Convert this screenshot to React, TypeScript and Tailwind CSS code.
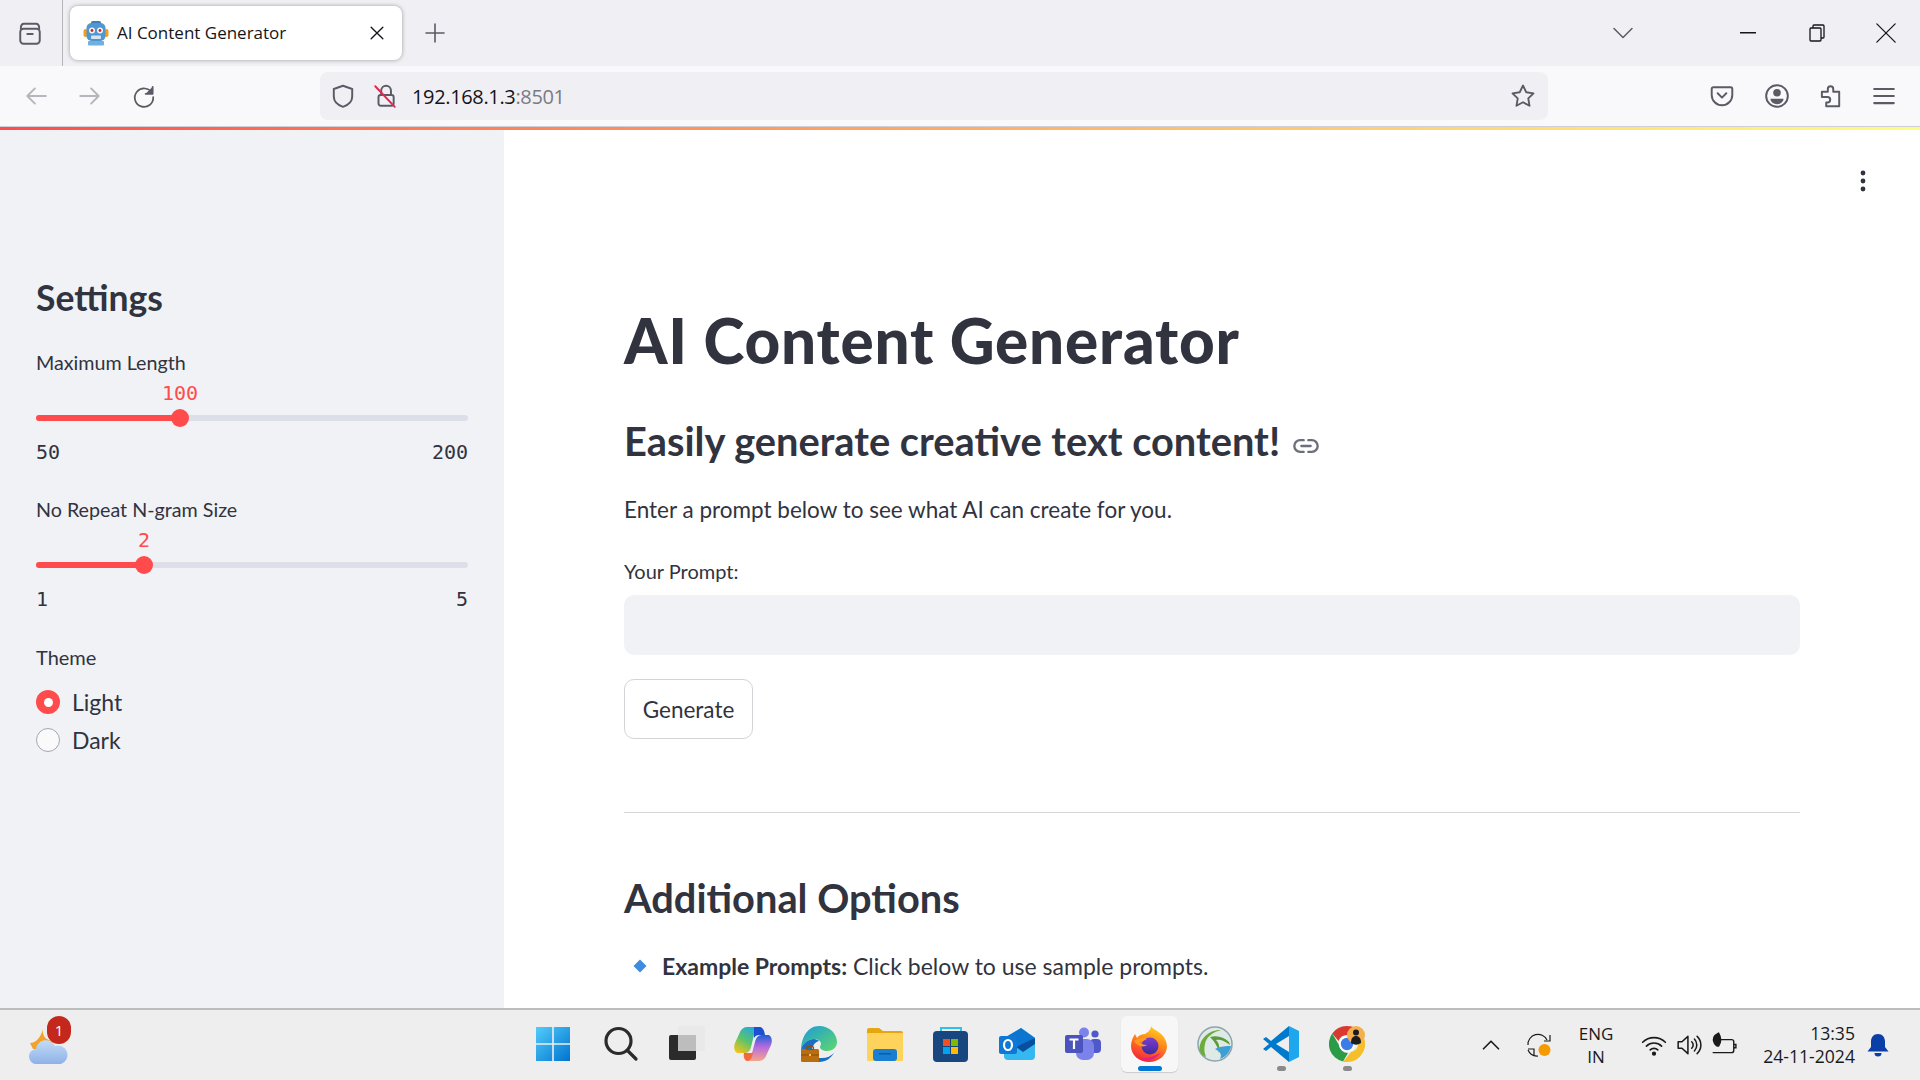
import { ReactNode } from "react";

const sans = "font-['Lato','Noto_Sans',sans-serif]";
const mono = "font-['DejaVu_Sans_Mono',monospace]";
const ui = "font-['Open_Sans','Noto_Sans',sans-serif]";

// stroked toolbar glyph
function Glyph({ size = 24, color = "#5b5b66", width = 1.8, children }: { size?: number; color?: string; width?: number; children: ReactNode }) {
  return (
    <svg width={size} height={size} viewBox="0 0 24 24" fill="none" stroke={color} strokeWidth={width} strokeLinecap="round" strokeLinejoin="round">
      {children}
    </svg>
  );
}

function RobotFavicon() {
  return (
    <svg width="26" height="26" viewBox="0 0 26 26">
      <rect x="0.5" y="9" width="4" height="8" rx="2" fill="#f59e1b" />
      <rect x="21.5" y="9" width="4" height="8" rx="2" fill="#f59e1b" />
      <rect x="8" y="1" width="10" height="4" rx="1.5" fill="#3f7fb8" />
      <rect x="3.5" y="3" width="19" height="18" rx="5" fill="#4f97d1" />
      <circle cx="9" cy="10.5" r="3" fill="#eef3f7" />
      <circle cx="17" cy="10.5" r="3" fill="#eef3f7" />
      <circle cx="9" cy="10.5" r="1.4" fill="#d2242c" />
      <circle cx="17" cy="10.5" r="1.4" fill="#d2242c" />
      <rect x="8" y="15.5" width="10" height="3.5" rx="1" fill="#d6e4ef" />
      <rect x="5" y="21" width="16" height="4.5" rx="1" fill="#6fb0e0" />
    </svg>
  );
}

function WeatherIcon() {
  return (
    <div className="relative h-[40px] w-[42px]">
      <svg width="40" height="40" viewBox="0 0 40 40" className="absolute left-0 top-0">
        <defs>
          <linearGradient id="cloud" x1="0" y1="0" x2="0" y2="1">
            <stop offset="0" stopColor="#c3dcf5" />
            <stop offset="1" stopColor="#8eb1e8" />
          </linearGradient>
        </defs>
        <path d="M14 4c-1 7 3 12 11 12l-6 8H4L1 18c6 0 11-6 13-14z" fill="#f3a32b" />
        <path d="M8 39a7.500 7.500 0 0 1-1-15 10 10 0 0 1 19-3 9 9 0 0 1 6 18z" fill="url(#cloud)" />
      </svg>
      <span className={`absolute left-[18px] top-[-9px] flex h-[28px] w-[24px] items-center justify-center rounded-full bg-[#c4281c] text-[15px] text-white ${ui}`}>1</span>
    </div>
  );
}

function WindowsLogo() {
  return (
    <svg width="36" height="36" viewBox="0 0 36 36">
      <defs>
        <linearGradient id="win" x1="0" y1="0" x2="1" y2="1">
          <stop offset="0" stopColor="#52cdfb" />
          <stop offset="1" stopColor="#0073cf" />
        </linearGradient>
      </defs>
      <path d="M1 1h16.200v16.200H1zM18.800 1H35v16.200H18.800zM1 18.800h16.200V35H1zM18.800 18.800H35V35H18.800z" fill="url(#win)" />
    </svg>
  );
}

function TaskView() {
  return (
    <svg width="36" height="36" viewBox="0 0 36 36">
      <rect x="0" y="9" width="27" height="25" rx="2" fill="#2b2b2b" />
      <rect x="9" y="0" width="27" height="25" rx="2" fill="#e7e7e7" fillOpacity="0.85" />
      <rect x="9" y="9" width="18" height="16" fill="#bdbdbd" />
    </svg>
  );
}

function Copilot() {
  return (
    <svg width="38" height="36" viewBox="0 0 38 36">
      <defs>
        <linearGradient id="cpa" x1="0.8" y1="0" x2="0.2" y2="1">
          <stop offset="0" stopColor="#1fa6e8" />
          <stop offset="0.55" stopColor="#5cc46a" />
          <stop offset="1" stopColor="#f2c21a" />
        </linearGradient>
        <linearGradient id="cpb" x1="0.5" y1="0" x2="0.5" y2="1">
          <stop offset="0" stopColor="#1d5fd6" />
          <stop offset="0.45" stopColor="#b56ae0" />
          <stop offset="1" stopColor="#f5a58a" />
        </linearGradient>
      </defs>
      <path d="M13 1h13c-4 1-5 4-6 8l-3 12c-1 4-3 6-7 6H4C1 27-1 22 1 17L6 6c1-3 4-5 7-5z" fill="url(#cpa)" />
      <path d="M25 35H12c4-1 5-4 6-8l3-11c1-4 3-7 7-7h6c3 0 5 5 3 10l-5 11c-1 3-4 5-7 5z" fill="url(#cpb)" />
      <path d="M20 1h6c2 0 4 2 5 8h-6c-2 0-4 1-5 3z" fill="#1d4fd0" />
      <path d="M10 27h9c-1 5-3 8-6 8-2 0-4-4-3-8z" fill="#f2693a" />
    </svg>
  );
}

function EdgeIcon() {
  return (
    <svg width="36" height="36" viewBox="0 0 36 36">
      <defs>
        <linearGradient id="edge" x1="0" y1="0" x2="1" y2="1">
          <stop offset="0" stopColor="#1c9ad8" />
          <stop offset="1" stopColor="#5fd96b" />
        </linearGradient>
      </defs>
      <path d="M18 0c11 0 18 8 18 16 0 6-5 9-10 9-4 0-7-2-7-4 0-1 1-2 1-3 0-3-3-5-7-5-6 0-13 5-13 12C0 11 7 0 18 0z" fill="url(#edge)" />
      <path d="M0 25c0-7 7-12 13-12 2 0 4 1 5 2-4 1-7 5-7 10 0 5 3 9 7 11C9 36 0 32 0 25z" fill="#1b6fc2" />
      <path d="M33 27c-3 5-8 9-15 9-3 0-5-2-7-4h10c5 0 9-2 12-5z" fill="#1b6fc2" />
      <rect x="0" y="23" width="18" height="13" rx="1.500" fill="#b96c10" />
      <rect x="5.500" y="20.500" width="7" height="3" rx="1" fill="none" stroke="#8a4f08" strokeWidth="1.200" />
      <rect x="0" y="28.500" width="18" height="1" fill="#8a4f08" />
      <rect x="8" y="28" width="2" height="2" fill="#f5c55a" />
    </svg>
  );
}

function FolderIcon() {
  return (
    <svg width="36" height="34" viewBox="0 0 36 34">
      <path d="M0 3a2 2 0 0 1 2-2h10l4 3h18a2 2 0 0 1 2 2v4H0z" fill="#e5a60f" />
      <rect x="0" y="6" width="36" height="28" rx="1" fill="#fdd35c" />
      <rect x="6" y="22" width="24" height="12" rx="3" fill="#1a7fd0" />
      <rect x="12" y="26" width="12" height="1.500" fill="#0c5da3" />
    </svg>
  );
}

function StoreIcon() {
  return (
    <svg width="36" height="36" viewBox="0 0 36 36">
      <path d="M8 6V2h20v4" fill="none" stroke="#2ec1ee" strokeWidth="2" />
      <rect x="0" y="5" width="35" height="31" rx="4" fill="#18467f" />
      <rect x="10" y="13" width="7" height="7" fill="#f25022" />
      <rect x="18" y="13" width="7" height="7" fill="#7fba00" />
      <rect x="10" y="21" width="7" height="7" fill="#00a4ef" />
      <rect x="18" y="21" width="7" height="7" fill="#ffb900" />
    </svg>
  );
}

function OutlookIcon() {
  return (
    <svg width="36" height="36" viewBox="0 0 36 36">
      <path d="M5 14L22 2l14 10v18a4 4 0 0 1-4 4H9a4 4 0 0 1-4-4z" fill="#35b8f1" />
      <path d="M22 2l14 10-14 10L5 12z" fill="#0b75cf" />
      <path d="M36 12v6l-12 8-7-5z" fill="#0a4f9e" />
      <rect x="0" y="10" width="18" height="18" rx="2" fill="#0f78d4" />
      <ellipse cx="9" cy="19" rx="4" ry="5" fill="none" stroke="#fff" strokeWidth="2.200" />
    </svg>
  );
}

function TeamsIcon() {
  return (
    <svg width="36" height="34" viewBox="0 0 36 34">
      <circle cx="19" cy="5.500" r="5" fill="#7b83eb" />
      <circle cx="30" cy="7" r="3.600" fill="#5059c9" />
      <rect x="25" y="12" width="11" height="14" rx="4" fill="#5059c9" />
      <rect x="11" y="12" width="18" height="21" rx="7" fill="#7b83eb" />
      <rect x="0" y="8" width="18" height="18" rx="2" fill="#4b53bc" />
      <path d="M4.500 12.500h9M9 12.500v9.500" stroke="#fff" strokeWidth="2.200" />
    </svg>
  );
}

function FirefoxIcon() {
  return (
    <svg width="36" height="36" viewBox="0 0 36 36">
      <defs>
        <linearGradient id="ffa" x1="0.7" y1="0" x2="0.3" y2="1">
          <stop offset="0" stopColor="#ffd51f" />
          <stop offset="0.5" stopColor="#ff7a1c" />
          <stop offset="1" stopColor="#f0213f" />
        </linearGradient>
        <linearGradient id="ffb" x1="0" y1="0" x2="0" y2="1">
          <stop offset="0" stopColor="#7d3fd1" />
          <stop offset="1" stopColor="#3b2a9c" />
        </linearGradient>
      </defs>
      <path d="M20 0c1 3 8 5 12 10 4 5 4 10 4 10 0 9-8 16-18 16S0 29 0 20c0-5 2-9 4-12l2 4c2-3 5-4 8-4 3-2 6-4 6-8z" fill="url(#ffa)" />
      <circle cx="19" cy="20" r="8.500" fill="url(#ffb)" />
      <path d="M3 15c4-3 9-4 13-2-3 1-5 3-8 3 2 2 5 3 8 3-4 3-10 1-13-4z" fill="#ff9a1f" />
      <path d="M9 33c7 3 17 0 21-7-4 4-14 6-21 7z" fill="#e0218a" />
    </svg>
  );
}

function GlobeIcon() {
  return (
    <svg width="36" height="36" viewBox="0 0 36 36">
      <circle cx="18" cy="18" r="17" fill="#dfe9e6" stroke="#8ba5ac" strokeWidth="1.500" />
      <path d="M2.500 24C2 13 12 3.500 24 4c-8 2-15 7-16 14-1 4-1 8 1 13-3-1-5-3-6.500-7z" fill="#6dab3c" />
      <path d="M13 11c7-2 14 0 19 5l1 3c-6-5-11-6-14-5 3 3 4 7 3 13-1-5-3-10-9-16z" fill="#5a9c38" />
      <path d="M18 23c6-3 11-3 16-3-1 6-5 11-11 13 2-4 1-7-5-10z" fill="#3d9fd3" />
    </svg>
  );
}

function VsCodeIcon() {
  return (
    <svg width="36" height="36" viewBox="0 0 36 36">
      <path d="M26 0l10 5v26l-10 5z" fill="#1fa7ee" />
      <path d="M26 0v10L13 18l13 8v10L8 21l-5 4-3-2 6-5-6-5 3-2 5 4z" fill="#007acc" />
    </svg>
  );
}

function ChromeIcon() {
  return (
    <svg width="36" height="36" viewBox="0 0 36 36">
      <path d="M18 0a18 18 0 0 1 15.600 9H18a9 9 0 0 0-8.500 6L3.200 7.500A18 18 0 0 1 18 0z" fill="#d93a2f" />
      <path d="M3.200 7.500L10 19a9 9 0 0 0 9 8l-5 8.500A18 18 0 0 1 3.200 7.500z" fill="#2b9b47" />
      <path d="M33.600 9A18 18 0 0 1 18 36l-4 0 8-10a9 9 0 0 0 2-17z" fill="#f5bf2a" />
      <circle cx="18" cy="18" r="8" fill="#fff" />
      <circle cx="18" cy="18" r="6.200" fill="#3a7de8" />
      <circle cx="27" cy="9" r="9" fill="#f4b04a" />
      <circle cx="27" cy="6.500" r="3" fill="#1d1d1d" />
      <path d="M22 17c0-5 2-7 5-7s5 2 5 7a9 9 0 0 1-10 0z" fill="#1d1d1d" />
    </svg>
  );
}

function TaskItem({ children, active, dot, className }: { children: ReactNode; active?: boolean; dot?: boolean; className?: string }) {
  return (
    <div className={`relative flex h-[56px] w-[66px] items-center justify-center ${className ?? ""}`}>
      {active && <div className="absolute left-[5px] top-0 h-[56px] w-[57px] rounded-md bg-[#f7f7f7] shadow-[0_1px_1px_rgba(0,0,0,0.15)]" />}
      <div className="relative flex items-center justify-center">{children}</div>
      {active && <div className="absolute bottom-[1px] left-[22px] h-[5px] w-[24px] rounded-full bg-[#0078d4]" />}
      {dot && <div className="absolute bottom-[1px] left-[29px] h-[5px] w-[9px] rounded-full bg-[#8a8a8a]" />}
    </div>
  );
}

function Slider({ label, value, min, max, thumbClass, fillClass, valueClass }: { label: string; value: string; min: string; max: string; thumbClass: string; fillClass: string; valueClass: string }) {
  return (
    <div>
      <div className="h-[30px] text-[19.700px] leading-[30px] text-[#31333f]">{label}</div>
      <div className="relative h-[90px] pt-[37px]">
        <div className={`absolute top-0 w-[60px] text-center text-[20px] leading-[30px] text-[#ff4b4b] ${mono} ${valueClass}`}>{value}</div>
        <div className="relative h-[6px] rounded-full bg-[#dcdfe8]">
          <div className={`h-[6px] rounded-full bg-[#ff4b4b] ${fillClass}`} />
          <div className={`absolute top-[-6px] h-[18px] w-[18px] rounded-full bg-[#ff4b4b] ${thumbClass}`} />
        </div>
        <div className={`mt-[16px] flex justify-between text-[20px] leading-[30px] text-[#31333f] ${mono}`}>
          <span>{min}</span>
          <span>{max}</span>
        </div>
      </div>
    </div>
  );
}

export default function App() {
  return (
    <div className={`flex h-screen w-[1920px] flex-col overflow-hidden bg-white ${sans}`}>
      {/* tab strip */}
      <div className="flex h-[66px] shrink-0 items-center bg-[#f0f0f4]">
        <div className="flex h-full w-[63px] items-center justify-center border-r border-[#b5b5bb] pr-[3px]">
          <Glyph size={26}>
            <rect x="3" y="8" width="18" height="14" rx="3" />
            <path d="M6 3.500h12M3.500 8c0-3 1-4.500 3-4.500M20.500 8c0-3-1-4.500-3-4.500M9.500 13h5" />
          </Glyph>
        </div>
        <div className="ml-[7px] flex h-[54px] w-[332px] items-center rounded-lg bg-white pl-[13px] pr-[15px] shadow-[0_0_4px_rgba(0,0,0,0.35)]">
          <RobotFavicon />
          <span className={`ml-[8px] text-[17px] text-[#15141a] ${ui}`}>AI Content Generator</span>
          <span className="ml-auto">
            <Glyph size={20} color="#15141a" width={1.600}>
              <path d="M5 5l14 14M19 5L5 19" />
            </Glyph>
          </span>
        </div>
        <div className="flex w-[66px] items-center justify-center">
          <Glyph size={24} color="#5b5b66" width={1.600}>
            <path d="M12 3v18M3 12h18" />
          </Glyph>
        </div>
        <div className="ml-auto flex items-center">
          <Glyph size={24} color="#5b5b66" width={1.500}>
            <path d="M3 7.500l9 9 9-9" />
          </Glyph>
          <div className="ml-[78px] flex w-[69px] justify-center">
            <svg width="16" height="2" viewBox="0 0 16 2"><rect width="16" height="1.500" fill="#15141a" /></svg>
          </div>
          <div className="flex w-[69px] justify-center">
            <svg width="16" height="18" viewBox="0 0 16 18" fill="none" stroke="#15141a" strokeWidth="1.300">
              <rect x="1" y="4" width="11" height="13" rx="1" />
              <path d="M4 4V2a1 1 0 0 1 1-1h9a1 1 0 0 1 1 1v11a1 1 0 0 1-1 1h-2" />
            </svg>
          </div>
          <div className="flex w-[69px] justify-center">
            <Glyph size={22} color="#15141a" width={1.400}>
              <path d="M2 2l20 20M22 2L2 22" />
            </Glyph>
          </div>
        </div>
      </div>

      {/* toolbar */}
      <div className="flex h-[61px] shrink-0 items-center border-b border-[#cfcfd8] bg-[#f9f9fb]">
        <div className="flex w-[72px] justify-center">
          <Glyph size={26} color="#b6b6bc"><path d="M21 12H4M11 5l-7 7 7 7" /></Glyph>
        </div>
        <div className="flex w-[36px] justify-center">
          <Glyph size={26} color="#b6b6bc"><path d="M3 12h17M13 5l7 7-7 7" /></Glyph>
        </div>
        <div className="flex w-[72px] justify-center">
          <Glyph size={26} color="#5b5b66" width={1.600}>
            <path d="M19.500 9.500A8.500 8.500 0 1 0 20.500 13" />
            <path d="M20 3.500v6.500h-6.500" fill="#5b5b66" />
          </Glyph>
        </div>
        <div className="ml-[140px] flex h-[48px] w-[1228px] items-center rounded-lg bg-[#f0f0f4] pl-[10px] pr-[11px]">
          <Glyph size={26}>
            <path d="M12 2.500l8.500 3v7c0 5-4 8-8.500 9.500-4.500-1.500-8.500-4.500-8.500-9.500v-7z" />
          </Glyph>
          <span className="ml-[16px]">
            <svg width="26" height="26" viewBox="0 0 24 24" fill="none" strokeWidth="1.800" strokeLinecap="round">
              <rect x="6" y="11" width="14" height="10" rx="2" stroke="#5b5b66" />
              <path d="M8.500 11V7a4.500 4.500 0 0 1 9 0v4" stroke="#5b5b66" />
              <path d="M3 3l18 19" stroke="#e22850" />
            </svg>
          </span>
          <span className={`ml-[14px] mt-[2px] text-[20px] tracking-[-0.35px] text-[#15141a] ${ui}`}>
            192.168.1.3<span className="text-[#7a7a83]">:8501</span>
          </span>
          <span className="ml-auto">
            <Glyph size={28} width={1.600}>
              <path d="M12 3l2.800 5.800 6.200.900-4.500 4.400 1.100 6.300L12 17.400l-5.600 3 1.100-6.300L3 9.700l6.200-.900z" />
            </Glyph>
          </span>
        </div>
        <div className="ml-[161px]">
          <Glyph size={26}>
            <path d="M4 4h16a1.500 1.500 0 0 1 1.500 1.500V11a9.500 9.500 0 0 1-19 0V5.500A1.500 1.500 0 0 1 4 4z" />
            <path d="M8 9.500l4 4 4-4" />
          </Glyph>
        </div>
        <div className="ml-[29px]">
          <svg width="26" height="26" viewBox="0 0 24 24">
            <circle cx="12" cy="12" r="10" fill="none" stroke="#5b5b66" strokeWidth="1.800" />
            <circle cx="12" cy="9" r="3.500" fill="#5b5b66" />
            <path d="M6 14.500h12c0 3-3 5-6 5s-6-2-6-5z" fill="#5b5b66" />
          </svg>
        </div>
        <div className="ml-[27px]">
          <Glyph size={26}>
            <path d="M4.500 8H10V5.500a2.500 2.500 0 0 1 5 0V8h5.500v13.500H8.500V18h1.200a2.500 2.500 0 0 0 0-5H4.500z" />
          </Glyph>
        </div>
        <div className="ml-[28px]">
          <Glyph size={26} width={2}>
            <path d="M3 5.500h18M3 12h18M3 18.500h18" />
          </Glyph>
        </div>
      </div>

      {/* running-app stripe */}
      <div className="h-[3px] shrink-0 bg-linear-to-r from-[#ff4b4b] to-[#fffd80]" />

      <div className="flex min-h-0 flex-1">
        {/* sidebar */}
        <aside className="w-[504px] shrink-0 bg-[#f0f2f6] pl-[36px] pr-[36px] pt-[148px]">
          <h2 className="text-[35.500px] font-bold leading-[40px] text-[#31333f]">Settings</h2>
          <div className="mt-[30px]">
            <Slider label="Maximum Length" value="100" min="50" max="200" fillClass="w-[144px]" thumbClass="left-[135px]" valueClass="left-[114px]" />
          </div>
          <div className="mt-[27px]">
            <Slider label="No Repeat N-gram Size" value="2" min="1" max="5" fillClass="w-[108px]" thumbClass="left-[99px]" valueClass="left-[78px]" />
          </div>
          <div className="mt-[28px] h-[30px] text-[20px] leading-[28px] text-[#31333f]">Theme</div>
          <div className="mt-[10px] flex h-[38px] items-center">
            <div className="flex h-[24px] w-[24px] items-center justify-center rounded-full bg-[#ff4b4b]">
              <div className="h-[9px] w-[9px] rounded-full bg-white" />
            </div>
            <span className="ml-[12px] text-[23px] text-[#31333f]">Light</span>
          </div>
          <div className="flex h-[38px] items-center">
            <div className="h-[24px] w-[24px] rounded-full border border-[#a3a8b4] bg-[#fafafa]" />
            <span className="ml-[12px] text-[23px] text-[#31333f]">Dark</span>
          </div>
        </aside>

        {/* main column */}
        <main className="relative min-w-0 flex-1 overflow-hidden pl-[120px] pr-[120px] pt-[175px]">
          <div className="absolute right-[45px] top-[39px]">
            <svg width="24" height="24" viewBox="0 0 24 24" fill="#31333f">
              <circle cx="12" cy="4" r="2.400" />
              <circle cx="12" cy="12" r="2.400" />
              <circle cx="12" cy="20" r="2.400" />
            </svg>
          </div>
          <h1 className="text-[62px] font-black leading-[70px] tracking-[0.8px] text-[#31333f]">AI Content Generator</h1>
          <div className="mt-[41px] flex items-center">
            <h2 className="text-[39.800px] font-bold leading-[50px] text-[#31333f]">Easily generate creative text content!</h2>
            <span className="ml-[12px] mt-[10px]">
              <svg width="28" height="28" viewBox="0 0 24 24" fill="none" stroke="#6b6f7b" strokeWidth="2" strokeLinecap="round">
                <path d="M10 7H7a5 5 0 0 0 0 10h3M14 7h3a5 5 0 0 1 0 10h-3M8 12h8" />
              </svg>
            </span>
          </div>
          <p className="mt-[29px] text-[22.500px] leading-[30px] text-[#31333f]">Enter a prompt below to see what AI can create for you.</p>
          <div className="mt-[34px] text-[20px] leading-[24px] text-[#31333f]">Your Prompt:</div>
          <div className="mt-[12px] h-[60px] rounded-[10px] bg-[#f0f2f6]" />
          <button className="mt-[24px] flex h-[60px] w-[129px] items-center justify-center rounded-[10px] border border-[#d3d4d8] bg-white pt-[2px] text-[22.500px] text-[#31333f]">Generate</button>
          <div className="mt-[73px] h-px bg-[#d6d7db]" />
          <h2 className="mt-[60px] text-[39.800px] font-bold leading-[50px] text-[#31333f]">Additional Options</h2>
          <div className="mt-[28px] flex items-center text-[23px] leading-[30px] text-[#31333f]">
            <svg width="16" height="16" viewBox="0 0 16 16" className="ml-[8px]">
              <path d="M8 1.500L14.500 8 8 14.500 1.500 8z" fill="#3f8be0" />
            </svg>
            <span className="ml-[14px]"><b>Example Prompts:</b> Click below to use sample prompts.</span>
          </div>
        </main>
      </div>

      {/* windows taskbar */}
      <div className={`flex h-[72px] shrink-0 items-center border-t-2 border-[#bdbdbd] bg-[#eeeeee] ${ui}`}>
        <div className="flex w-[520px] shrink-0 pl-[29px]">
          <WeatherIcon />
        </div>
        <div className="-mt-[2px] flex items-center">
          <TaskItem className="mr-[2px]"><WindowsLogo /></TaskItem>
          <TaskItem>
            <svg width="36" height="36" viewBox="0 0 36 36" fill="none" stroke="#2b2b2b" strokeWidth="3.200" strokeLinecap="round">
              <circle cx="15.500" cy="15" r="12.500" />
              <path d="M25 25l8 8" />
            </svg>
          </TaskItem>
          <TaskItem><TaskView /></TaskItem>
          <TaskItem><Copilot /></TaskItem>
          <TaskItem><EdgeIcon /></TaskItem>
          <TaskItem><FolderIcon /></TaskItem>
          <TaskItem><StoreIcon /></TaskItem>
          <TaskItem><OutlookIcon /></TaskItem>
          <TaskItem><TeamsIcon /></TaskItem>
          <TaskItem active><FirefoxIcon /></TaskItem>
          <TaskItem><GlobeIcon /></TaskItem>
          <TaskItem dot><VsCodeIcon /></TaskItem>
          <TaskItem dot><ChromeIcon /></TaskItem>
        </div>
        <div className="ml-[101px] flex items-center text-[#1a1a1a]">
          <Glyph size={20} color="#1a1a1a" width={2}><path d="M3 16.500l9-9 9 9" /></Glyph>
          <span className="ml-[25px]">
            <svg width="26" height="26" viewBox="0 0 26 26" fill="none" stroke="#1a1a1a" strokeWidth="1.200">
              <path d="M2 13a10 10 0 0 1 19-5M24 3v6h-6M2 17h6v6M2 18a10 10 0 0 0 10 6" />
              <circle cx="18.500" cy="18" r="6" fill="#f59b00" stroke="none" />
            </svg>
          </span>
          <div className="ml-[22px] flex w-[44px] flex-col items-center text-[17px] leading-[23px]">
            <span>ENG</span>
            <span>IN</span>
          </div>
          <span className="ml-[23px]">
            <svg width="26" height="26" viewBox="0 0 24 24" fill="none" stroke="#1a1a1a" strokeWidth="1.500" strokeLinecap="round">
              <path d="M1.500 9.500a15 15 0 0 1 21 0M5 13a10 10 0 0 1 14 0M8.500 16.500a5 5 0 0 1 7 0" />
              <circle cx="12" cy="20" r="1.200" fill="#1a1a1a" />
            </svg>
          </span>
          <span className="ml-[9px]">
            <svg width="26" height="26" viewBox="0 0 24 24" fill="none" stroke="#1a1a1a" strokeWidth="1.400" strokeLinecap="round" strokeLinejoin="round">
              <path d="M2 9v6h3.500l5.500 5V4L5.500 9zM14.500 9a4 4 0 0 1 0 6M17 6.500a8 8 0 0 1 0 11M19.500 4a11 11 0 0 1 0 16" />
            </svg>
          </span>
          <span className="ml-[9px]">
            <svg width="26" height="26" viewBox="0 0 24 24" fill="none" stroke="#1a1a1a" strokeWidth="1.300" strokeLinecap="round">
              <path d="M8 7h11a2 2 0 0 1 2 2v8a2 2 0 0 1-2 2H2M21 11.500h2v3h-2" />
              <path d="M7 1C3 3 1 6 3 10c1 2 3 3 4 3 2-3 3-7 0-12z" fill="#1a1a1a" />
            </svg>
          </span>
          <div className="ml-[12px] flex w-[106px] flex-col items-end text-[17.600px] leading-[23px]">
            <span>13:35</span>
            <span>24-11-2024</span>
          </div>
          <span className="ml-[12px]">
            <svg width="22" height="24" viewBox="0 0 22 24" fill="#0b3fa8">
              <path d="M11 1c4.500 0 7 3.500 7 7.500V14l3.500 4.500H.5L4 14V8.500C4 4.500 6.500 1 11 1z" />
              <path d="M7.500 20h7a3.500 3.500 0 0 1-7 0z" />
            </svg>
          </span>
        </div>
      </div>
    </div>
  );
}
